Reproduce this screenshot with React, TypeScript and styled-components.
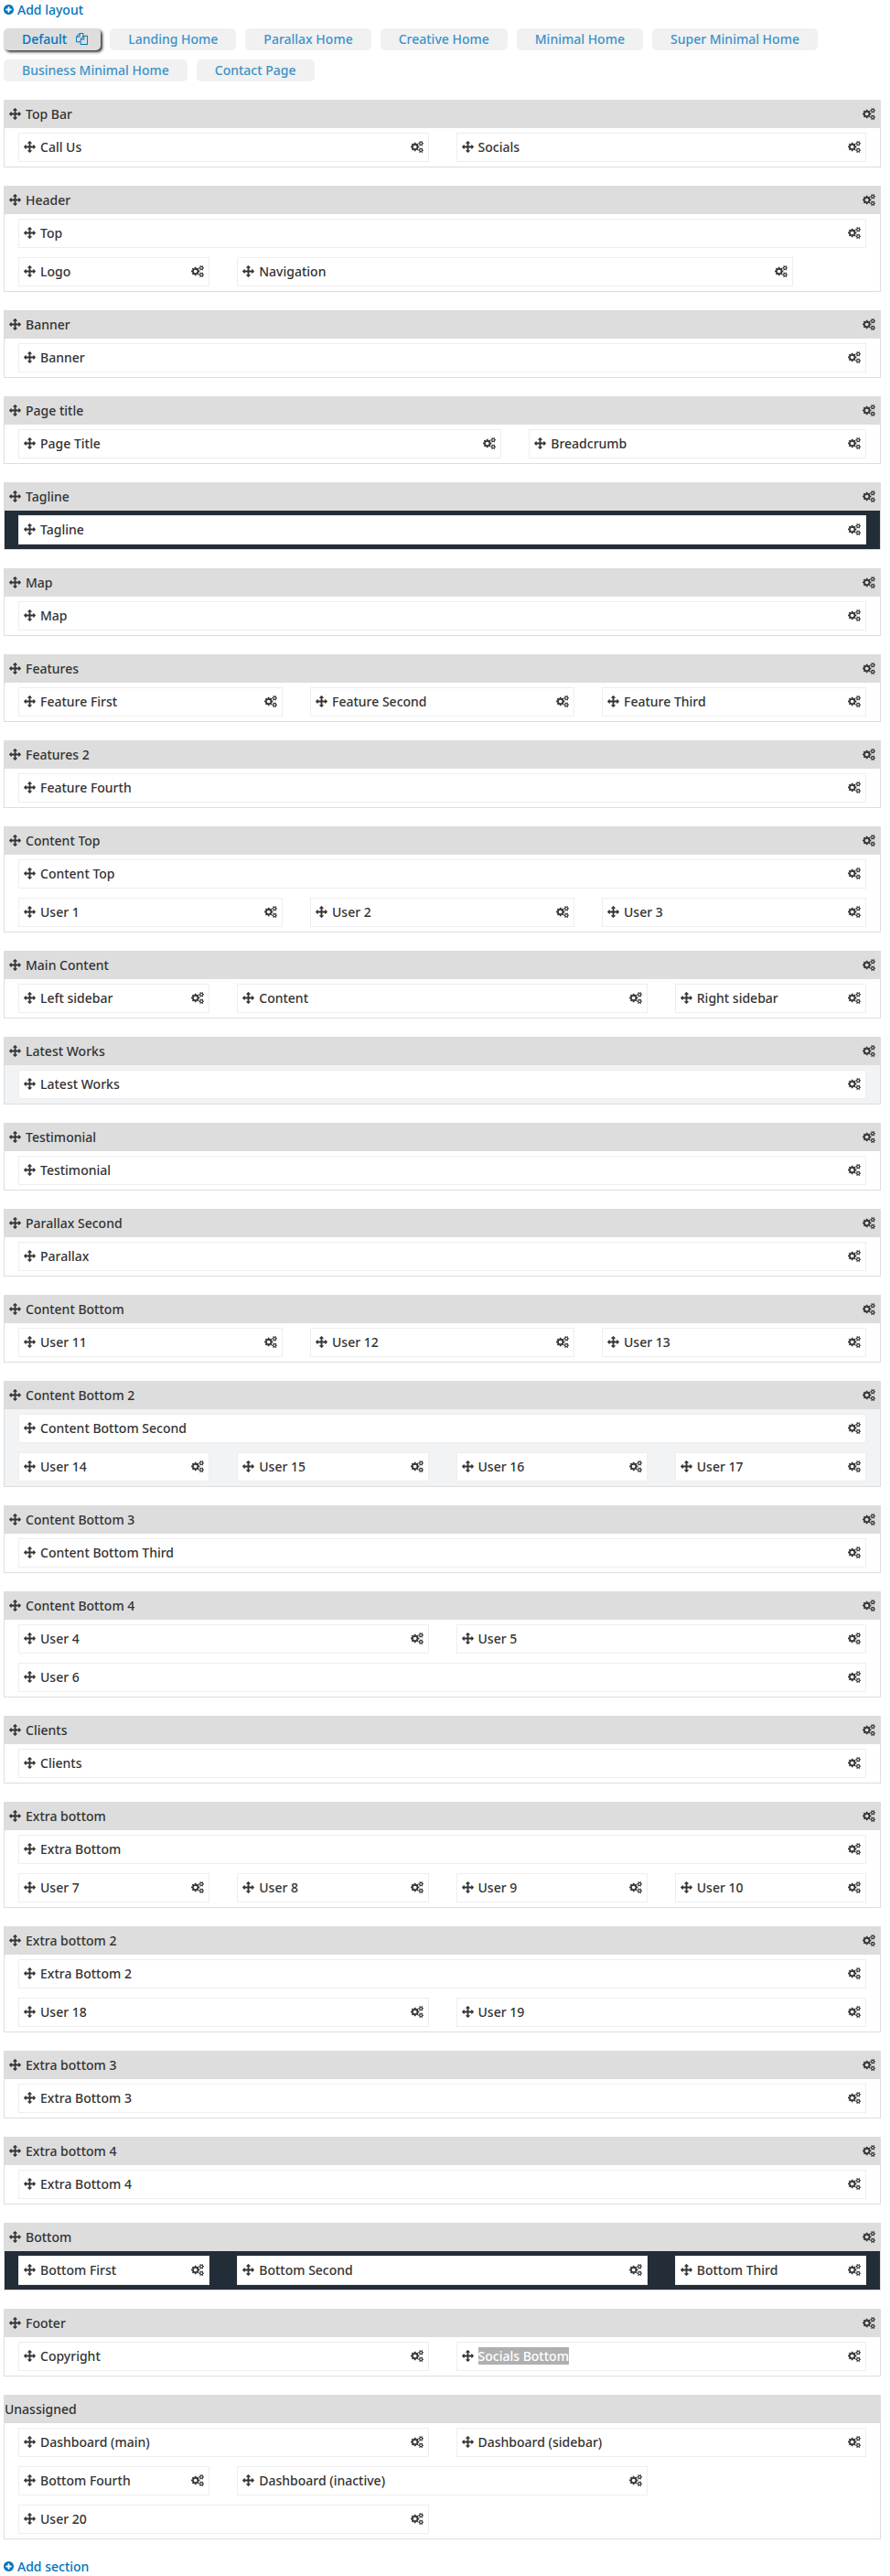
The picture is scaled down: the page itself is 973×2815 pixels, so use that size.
import React, { useState } from "react";
import styled, { createGlobalStyle } from "styled-components";

const GlobalStyle = createGlobalStyle`
  *, *::before, *::after { box-sizing: border-box; }
  body {
    margin: 0;
    background: #fff;
    color: #333;
    font: 500 14px/20px "Noto Sans", "Lucida Grande", sans-serif;
  }
  button { font: inherit; color: inherit; }
`;

type Tone = "plain" | "muted" | "dark";

const toneColors: Record<Tone, string> = {
  plain: "#fff",
  muted: "#f2f3f5",
  dark: "#232d37",
};

interface Region {
  name: string;
  span: number;
  selected?: boolean;
}

interface SectionData {
  name: string;
  tone?: Tone;
  fixed?: boolean;
  regions: Region[];
}

const layouts = [
  "Default",
  "Landing Home",
  "Parallax Home",
  "Creative Home",
  "Minimal Home",
  "Super Minimal Home",
  "Business Minimal Home",
  "Contact Page",
];

const r = (name: string, span = 12, selected = false): Region => ({ name, span, selected });

const sections: SectionData[] = [
  { name: "Top Bar", regions: [r("Call Us", 6), r("Socials", 6)] },
  { name: "Header", regions: [r("Top"), r("Logo", 3), r("Navigation", 8)] },
  { name: "Banner", regions: [r("Banner")] },
  { name: "Page title", regions: [r("Page Title", 7), r("Breadcrumb", 5)] },
  { name: "Tagline", tone: "dark", regions: [r("Tagline")] },
  { name: "Map", regions: [r("Map")] },
  { name: "Features", regions: [r("Feature First", 4), r("Feature Second", 4), r("Feature Third", 4)] },
  { name: "Features 2", regions: [r("Feature Fourth")] },
  { name: "Content Top", regions: [r("Content Top"), r("User 1", 4), r("User 2", 4), r("User 3", 4)] },
  { name: "Main Content", regions: [r("Left sidebar", 3), r("Content", 6), r("Right sidebar", 3)] },
  { name: "Latest Works", tone: "muted", regions: [r("Latest Works")] },
  { name: "Testimonial", regions: [r("Testimonial")] },
  { name: "Parallax Second", regions: [r("Parallax")] },
  { name: "Content Bottom", regions: [r("User 11", 4), r("User 12", 4), r("User 13", 4)] },
  {
    name: "Content Bottom 2",
    tone: "muted",
    regions: [r("Content Bottom Second"), r("User 14", 3), r("User 15", 3), r("User 16", 3), r("User 17", 3)],
  },
  { name: "Content Bottom 3", regions: [r("Content Bottom Third")] },
  { name: "Content Bottom 4", regions: [r("User 4", 6), r("User 5", 6), r("User 6")] },
  { name: "Clients", regions: [r("Clients")] },
  { name: "Extra bottom", regions: [r("Extra Bottom"), r("User 7", 3), r("User 8", 3), r("User 9", 3), r("User 10", 3)] },
  { name: "Extra bottom 2", regions: [r("Extra Bottom 2"), r("User 18", 6), r("User 19", 6)] },
  { name: "Extra bottom 3", regions: [r("Extra Bottom 3")] },
  { name: "Extra bottom 4", regions: [r("Extra Bottom 4")] },
  { name: "Bottom", tone: "dark", regions: [r("Bottom First", 3), r("Bottom Second", 6), r("Bottom Third", 3)] },
  { name: "Footer", regions: [r("Copyright", 6), r("Socials Bottom", 6, true)] },
  {
    name: "Unassigned",
    fixed: true,
    regions: [
      r("Dashboard (main)", 6),
      r("Dashboard (sidebar)", 6),
      r("Bottom Fourth", 3),
      r("Dashboard (inactive)", 6),
      r("User 20", 6),
    ],
  },
];

const Page = styled.main`
  display: flex;
  flex-direction: column;
  gap: 20px;
  padding: 1px 10px 0 4px;
`;

const Top = styled.div`
  display: flex;
  flex-direction: column;
  gap: 10px;
`;

const AddLink = styled.a`
  display: flex;
  align-items: center;
  align-self: flex-start;
  gap: 4px;
  padding-bottom: 1px;
  line-height: 19px;
  color: #0074bd;
  text-decoration: none;
`;

const Tabs = styled.div`
  display: flex;
  flex-wrap: wrap;
  gap: 10px;
`;

const Tab = styled.button<{ $active: boolean }>`
  display: flex;
  align-items: center;
  gap: 10px;
  height: 24px;
  padding: 0 ${(p) => (p.$active ? 14 : 20)}px 1px 20px;
  border: 0;
  border-radius: 5px;
  background: ${(p) => (p.$active ? "#ddd" : "#f1f1f1")};
  box-shadow: ${(p) => (p.$active ? "2px 2px 3px #333" : "none")};
  color: ${(p) => (p.$active ? "#0074bd" : "#3c92ca")};
  white-space: nowrap;
  cursor: pointer;
`;

const Panel = styled.section<{ $tone: Tone }>`
  border: 1px solid #ddd;
  background: ${(p) => toneColors[p.$tone]};
`;

const PanelHeader = styled.header<{ $fixed: boolean }>`
  display: flex;
  align-items: center;
  height: 30px;
  padding: 0 5px 1px ${(p) => (p.$fixed ? 0 : 5)}px;
  background: #ddd;
`;

const PanelTitle = styled.h2`
  flex: 1;
  margin: 0;
  font: inherit;
`;

const Grid = styled.div`
  display: grid;
  grid-template-columns: repeat(12, minmax(0, 1fr));
`;

const RegionBox = styled.div<{ $span: number }>`
  grid-column: span ${(p) => p.$span};
  display: flex;
  align-items: center;
  height: 32px;
  margin: 5px 15px;
  padding: 0 5px 1px;
  border: 1px solid #eee;
  background: #fff;
`;

const RegionName = styled.span`
  flex: 1;
  min-width: 0;
  white-space: nowrap;
`;

const Selection = styled.mark`
  display: inline-block;
  line-height: 19px;
  background: #b0b0b0;
  color: #fff;
`;

const IconButton = styled.button`
  display: flex;
  padding: 0;
  border: 0;
  background: none;
  cursor: pointer;
`;

const MoveButton = styled(IconButton)`
  margin-right: 5px;
  cursor: move;
`;

const Glyph = styled.svg`
  display: block;
  flex: none;
  height: 13px;
  fill: currentColor;
`;

const MoveIcon = () => (
  <Glyph width="13" viewBox="0 0 1792 1792" aria-hidden="true">
    <path d="M1792 896q0 26-19 45l-256 256q-19 19-45 19t-45-19-19-45v-128h-384v384h128q26 0 45 19t19 45-19 45l-256 256q-19 19-45 19t-45-19l-256-256q-19-19-19-45t19-45 45-19h128v-384h-384v128q0 26-19 45t-45 19-45-19l-256-256q-19-19-19-45t19-45l256-256q19-19 45-19t45 19 19 45v128h384v-384h-128q-26 0-45-19t-19-45 19-45l256-256q19-19 45-19t45 19l256 256q19 19 19 45t-19 45-45 19h-128v384h384v-128q0-26 19-45t45-19 45 19l256 256q19 19 19 45z" />
  </Glyph>
);

const GearsIcon = () => (
  <Glyph width="14" viewBox="0 0 1920 1792" aria-hidden="true">
    <path d="M896 896q0-106-75-181t-181-75-181 75-75 181 75 181 181 75 181-75 75-181zm768 512q0-52-38-90t-90-38-90 38-38 90q0 53 37.5 90.5t90.5 37.5 90.5-37.5 37.5-90.5zm0-1024q0-52-38-90t-90-38-90 38-38 90q0 53 37.5 90.5t90.5 37.5 90.5-37.5 37.5-90.5zm-384 421v185q0 10-7 19.5t-16 10.5l-155 24q-11 35-32 76 34 48 90 115 7 11 7 20 0 12-7 19-23 30-82.5 89.5t-78.5 59.5q-11 0-21-7l-115-90q-37 19-77 31-11 108-23 155-7 24-30 24h-186q-11 0-20-7.5t-10-17.5l-23-153q-34-10-75-31l-118 89q-7 7-20 7-11 0-21-8-144-133-144-160 0-9 7-19 10-14 41-53t47-61q-23-44-35-82l-152-24q-10-1-17-9.5t-7-19.5v-185q0-10 7-19.5t16-10.5l155-24q11-35 32-76-34-48-90-115-7-11-7-20 0-12 7-20 22-30 82-89t79-59q11 0 21 7l115 90q34-18 77-32 11-108 23-154 7-24 30-24h186q11 0 20 7.5t10 17.5l23 153q34 10 75 31l118-89q8-7 20-7 11 0 21 8 144 133 144 160 0 8-7 19-12 16-42 54t-45 60q23 48 34 82l152 23q10 2 17 10.5t7 19.5zm640 533v140q0 16-149 31-12 27-30 52 51 113 51 138 0 4-4 7-122 71-124 71-8 0-46-47t-52-68q-20 2-30 2t-30-2q-14 21-52 68t-46 47q-2 0-124-71-4-3-4-7 0-25 51-138-18-25-30-52-149-15-149-31v-140q0-16 149-31 13-29 30-52-51-113-51-138 0-4 4-7 4-2 35-20t59-34 30-16q8 0 46 46.5t52 67.5q20-2 30-2t30 2q51-71 92-112l6-2q4 0 124 70 4 3 4 7 0 25-51 138 17 23 30 52 149 15 149 31zm0-1024v140q0 16-149 31-12 27-30 52 51 113 51 138 0 4-4 7-122 71-124 71-8 0-46-47t-52-68q-20 2-30 2t-30-2q-14 21-52 68t-46 47q-2 0-124-71-4-3-4-7 0-25 51-138-18-25-30-52-149-15-149-31v-140q0-16 149-31 13-29 30-52-51-113-51-138 0-4 4-7 4-2 35-20t59-34 30-16q8 0 46 46.5t52 67.5q20-2 30-2t30 2q51-71 92-112l6-2q4 0 124 70 4 3 4 7 0 25-51 138 17 23 30 52 149 15 149 31z" />
  </Glyph>
);

const PlusIcon = () => (
  <Glyph width="11" viewBox="128 0 1536 1792" aria-hidden="true">
    <path d="M1344 960v-128q0-26-19-45t-45-19h-256v-256q0-26-19-45t-45-19h-128q-26 0-45 19t-19 45v256h-256q-26 0-45 19t-19 45v128q0 26 19 45t45 19h256v256q0 26 19 45t45 19h128q26 0 45-19t19-45v-256h256q26 0 45-19t19-45zm320-64q0 209-103 385.5t-279.5 279.5-385.5 103-385.5-103-279.5-279.5-103-385.5 103-385.5 279.5-279.5 385.5-103 385.5 103 279.5 279.5 103 385.5z" />
  </Glyph>
);

const CopyIcon = () => (
  <Glyph width="13" viewBox="0 0 1792 1792" aria-hidden="true">
    <path d="M1696 384q40 0 68 28t28 68v1216q0 40-28 68t-68 28h-960q-40 0-68-28t-28-68v-288h-544q-40 0-68-28t-28-68v-672q0-40 20-88t48-76l408-408q28-28 76-48t88-20h416q40 0 68 28t28 68v328q68-40 128-40h416zm-544 213l-299 299h299v-299zm-640-384l-299 299h299v-299zm196 647l316-316v-416h-384v416q0 40-28 68t-68 28h-416v640h512v-256q0-40 20-88t48-76zm956 804v-1152h-384v416q0 40-28 68t-68 28h-416v640h896z" />
  </Glyph>
);

const Section = ({ section }: { section: SectionData }) => (
  <Panel $tone={section.tone ?? "plain"}>
    <PanelHeader $fixed={!!section.fixed}>
      {!section.fixed && (
        <MoveButton type="button" aria-label={`Move ${section.name}`}>
          <MoveIcon />
        </MoveButton>
      )}
      <PanelTitle>{section.name}</PanelTitle>
      {!section.fixed && (
        <IconButton type="button" aria-label={`${section.name} settings`}>
          <GearsIcon />
        </IconButton>
      )}
    </PanelHeader>
    <Grid>
      {section.regions.map((region) => (
        <RegionBox key={region.name} $span={region.span}>
          <MoveButton type="button" aria-label={`Move ${region.name}`}>
            <MoveIcon />
          </MoveButton>
          <RegionName>{region.selected ? <Selection>{region.name}</Selection> : region.name}</RegionName>
          <IconButton type="button" aria-label={`${region.name} settings`}>
            <GearsIcon />
          </IconButton>
        </RegionBox>
      ))}
    </Grid>
  </Panel>
);

export default function App() {
  const [active, setActive] = useState("Default");
  return (
    <>
      <GlobalStyle />
      <Page>
        <Top>
          <AddLink href="#add-layout">
            <PlusIcon />
            Add layout
          </AddLink>
          <Tabs>
            {layouts.map((name) => (
              <Tab key={name} type="button" $active={name === active} onClick={() => setActive(name)}>
                {name}
                {name === active && <CopyIcon />}
              </Tab>
            ))}
          </Tabs>
        </Top>
        {sections.map((section) => (
          <Section key={section.name} section={section} />
        ))}
        <AddLink href="#add-section">
          <PlusIcon />
          Add section
        </AddLink>
      </Page>
    </>
  );
}
